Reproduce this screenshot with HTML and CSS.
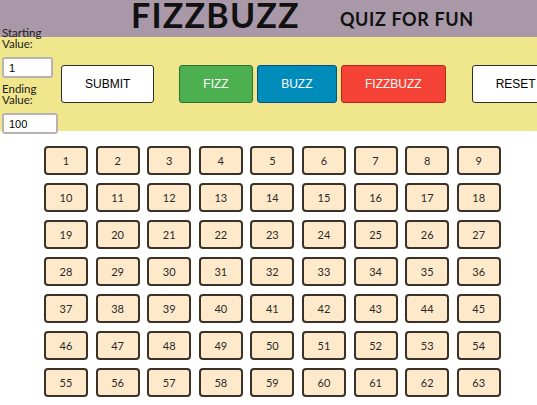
FILE: index.html
```html
<!DOCTYPE html>
<html>
<head>
<meta charset="utf-8">
<title>FizzBuzz Quiz</title>
<link rel="stylesheet" href="styles.css">
</head>
<body>
<header class="top">
  <h1 class="title">FIZZBUZZ</h1>
  <h2 class="subtitle">QUIZ FOR FUN</h2>
</header>
<section class="controls">
  <div class="range">
    <label class="lbl lbl-start" for="start">Starting<br>Value:</label>
    <input class="num num-start" id="start" type="text" value="1">
    <label class="lbl lbl-end" for="end">Ending<br>Value:</label>
    <input class="num num-end" id="end" type="text" value="100">
  </div>
  <button class="btn btn-white btn-submit">SUBMIT</button>
  <div class="group">
    <button class="btn btn-fizz">FIZZ</button>
    <button class="btn btn-buzz">BUZZ</button>
    <button class="btn btn-fizzbuzz">FIZZBUZZ</button>
  </div>
  <button class="btn btn-white btn-reset">RESET</button>
</section>
<main class="grid">
  <div class="cell">1</div><div class="cell">2</div><div class="cell">3</div><div class="cell">4</div><div class="cell">5</div><div class="cell">6</div><div class="cell">7</div><div class="cell">8</div><div class="cell">9</div>
  <div class="cell">10</div><div class="cell">11</div><div class="cell">12</div><div class="cell">13</div><div class="cell">14</div><div class="cell">15</div><div class="cell">16</div><div class="cell">17</div><div class="cell">18</div>
  <div class="cell">19</div><div class="cell">20</div><div class="cell">21</div><div class="cell">22</div><div class="cell">23</div><div class="cell">24</div><div class="cell">25</div><div class="cell">26</div><div class="cell">27</div>
  <div class="cell">28</div><div class="cell">29</div><div class="cell">30</div><div class="cell">31</div><div class="cell">32</div><div class="cell">33</div><div class="cell">34</div><div class="cell">35</div><div class="cell">36</div>
  <div class="cell">37</div><div class="cell">38</div><div class="cell">39</div><div class="cell">40</div><div class="cell">41</div><div class="cell">42</div><div class="cell">43</div><div class="cell">44</div><div class="cell">45</div>
  <div class="cell">46</div><div class="cell">47</div><div class="cell">48</div><div class="cell">49</div><div class="cell">50</div><div class="cell">51</div><div class="cell">52</div><div class="cell">53</div><div class="cell">54</div>
  <div class="cell">55</div><div class="cell">56</div><div class="cell">57</div><div class="cell">58</div><div class="cell">59</div><div class="cell">60</div><div class="cell">61</div><div class="cell">62</div><div class="cell">63</div>
  <div class="cell">64</div><div class="cell">65</div><div class="cell">66</div><div class="cell">67</div><div class="cell">68</div><div class="cell">69</div><div class="cell">70</div><div class="cell">71</div><div class="cell">72</div>
  <div class="cell">73</div><div class="cell">74</div><div class="cell">75</div><div class="cell">76</div><div class="cell">77</div><div class="cell">78</div><div class="cell">79</div><div class="cell">80</div><div class="cell">81</div>
  <div class="cell">82</div><div class="cell">83</div><div class="cell">84</div><div class="cell">85</div><div class="cell">86</div><div class="cell">87</div><div class="cell">88</div><div class="cell">89</div><div class="cell">90</div>
  <div class="cell">91</div><div class="cell">92</div><div class="cell">93</div><div class="cell">94</div><div class="cell">95</div><div class="cell">96</div><div class="cell">97</div><div class="cell">98</div><div class="cell">99</div>
  <div class="cell">100</div>
</main>
</body>
</html>
```

FILE: styles.css
```css
* { box-sizing: border-box; }

html, body {
  margin: 0;
  padding: 0;
  background: #ffffff;
  font-family: Lato, "Noto Sans", sans-serif;
  color: #1e1e1e;
  overflow-x: hidden;
}

.top {
  height: 37px;
  background: #a898a8;
  display: flex;
  align-items: flex-start;
  padding-left: 131px;
  gap: 40px;
}

.title {
  margin: 0;
  font-size: 34px;
  line-height: 30px;
  font-weight: 700;
  letter-spacing: 1.2px;
  color: #111;
}

.subtitle {
  margin: 9px 0 0;
  font-size: 18px;
  line-height: 20px;
  font-weight: 700;
  letter-spacing: 0.6px;
  color: #111;
}

.controls {
  height: 94px;
  background: #f0e68c;
  display: flex;
  align-items: center;
  white-space: nowrap;
}

.range {
  display: flex;
  flex-direction: column;
  align-items: flex-start;
  align-self: flex-start;
  margin-top: -10px;
  padding-left: 2px;
  width: 61px;
  flex: none;
}

.lbl {
  display: block;
  font-size: 11.5px;
  line-height: 11px;
  color: #222;
}

.num {
  height: 21px;
  border: 2px solid #bab2b0;
  border-radius: 3px;
  background: #fff;
  padding: 0 5px;
  font-family: "Liberation Sans", Arial, sans-serif;
  font-size: 11px;
  color: #000;
  outline: none;
}

.num-start { width: 51px; margin-top: 8px; }
.lbl-end { margin-top: 5px; }
.num-end { width: 56px; margin-top: 8px; }

.btn {
  height: 38px;
  padding: 0 23px;
  border-radius: 3px;
  font-family: "Liberation Sans", Arial, sans-serif;
  font-size: 12px;
  color: #fff;
  flex: none;
  cursor: pointer;
}

.btn-white {
  background: #fff;
  color: #000;
  border: 1.5px solid #2f2f2f;
}

.btn-submit { margin-right: 25px; }

.group {
  display: flex;
  gap: 4.5px;
  flex: none;
}

.btn-fizz { background: #4caf50; border: 1.5px solid #2e7031; }
.btn-buzz { background: #008cba; border: 1.5px solid #0b4f86; }
.btn-fizzbuzz { background: #f44336; border: 1.5px solid #b3271c; }

.btn-reset { margin-left: 26px; }

.grid {
  display: grid;
  grid-template-columns: repeat(9, 44px);
  grid-auto-rows: 29px;
  column-gap: 7.6px;
  row-gap: 8px;
  margin: 15px 0 20px 44px;
}

.cell {
  display: flex;
  align-items: center;
  justify-content: center;
  background: #ffe9cb;
  border: 2px solid #3a3129;
  border-radius: 4px;
  font-size: 11px;
  color: #2a2a2a;
}
```
